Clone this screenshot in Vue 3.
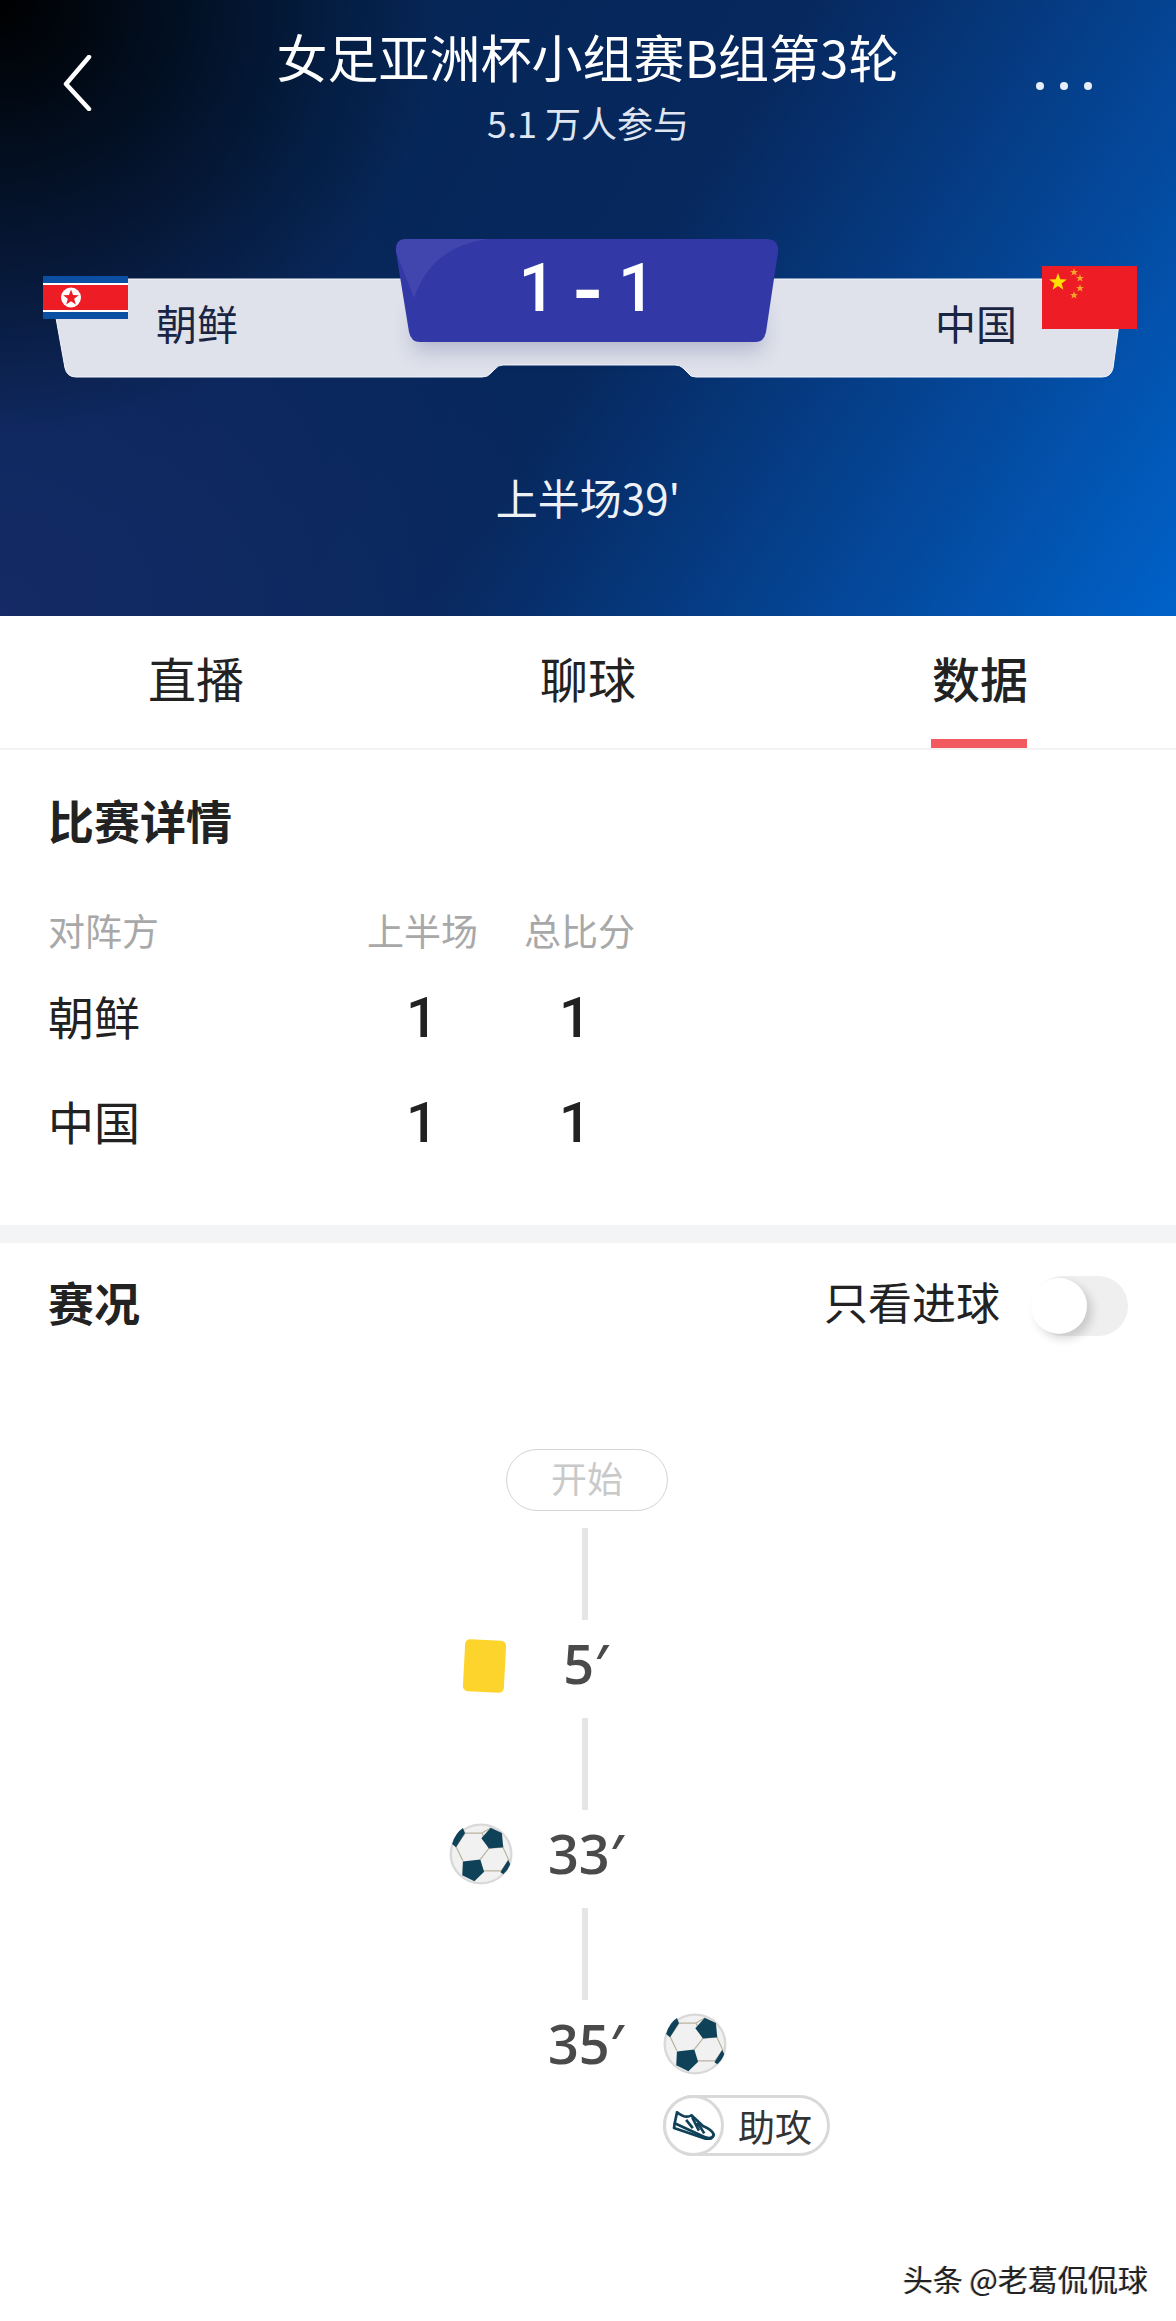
<template>
  <div class="page">
    <header class="hero">
      <div class="topbar">
        <div class="back">
          <svg width="30" height="56" viewBox="0 0 30 56"><path d="M27 2 L4 29 L27 54" fill="none" stroke="#fff" stroke-width="4.5" stroke-linecap="round" stroke-linejoin="round" /></svg>
        </div>
        <div class="heading">
          <h1>女足亚洲杯小组赛B组第3轮</h1>
          <p>5.1 万人参与</p>
        </div>
        <div class="more"><i></i><i></i><i></i></div>
      </div>

      <div class="board">
        <svg class="plate" width="1176" height="140" viewBox="0 0 1176 140">
          <path d="M49 39 H1125 L1113 128 Q1111 137 1102 137 H696 Q690 137 688 133 L683 128 Q680 125 675 125 H503 Q498 125 495 129 L491 133 Q488 137 482 137 H76 Q67 137 65 128 Z" fill="#dfe2eb" stroke="#f4f6fb" stroke-width="1" />
        </svg>
        <div class="shadow"></div>
        <svg class="score-bg" width="392" height="110" viewBox="0 0 392 110">
          <path d="M14 1 H374 Q387 1 386 14 L374 94 Q372 104 363 104 H28 Q19 104 17 94 L4 14 Q3 1 14 1Z" fill="#3238a6" />
          <path d="M14 1 H96 Q40 8 22 60 L4 14 Q3 1 14 1Z" fill="#4046ae" />
        </svg>
        <div class="score"><span>1</span><b>–</b><span>1</span></div>
        <svg class="flag flag-kp" width="85" height="43" viewBox="0 0 85 43">
          <rect width="85" height="43" fill="#0a4fa2" />
          <rect y="7" width="85" height="29" fill="#fff" />
          <rect y="9" width="85" height="25" fill="#ee1c25" />
          <circle cx="28" cy="21.5" r="10" fill="#fff" />
          <polygon points="28,13.5 30,19 35.8,19.2 31.2,22.8 32.8,28.4 28,25.2 23.2,28.4 24.8,22.8 20.2,19.2 26,19" fill="#ee1c25" />
        </svg>
        <svg class="flag flag-cn" width="95" height="63" viewBox="0 0 95 63">
          <rect width="95" height="63" fill="#ee1c25" />
          <polygon points="16,7 18.2,13.2 24.8,13.4 19.6,17.4 21.4,23.8 16,20 10.6,23.8 12.4,17.4 7.2,13.4 13.8,13.2" fill="#ffe100" />
          <g fill="#f2a52a">
            <polygon points="32,2 33,5 36,5 33.6,6.8 34.6,9.6 32,8 29.4,9.6 30.4,6.8 28,5 31,5" />
            <polygon points="38,8 39,11 42,11 39.6,12.8 40.6,15.6 38,14 35.4,15.6 36.4,12.8 34,11 37,11" />
            <polygon points="38,18 39,21 42,21 39.6,22.8 40.6,25.6 38,24 35.4,25.6 36.4,22.8 34,21 37,21" />
            <polygon points="32,25 33,28 36,28 33.6,29.8 34.6,32.6 32,31 29.4,32.6 30.4,29.8 28,28 31,28" />
          </g>
        </svg>
        <div class="names">
          <span>朝鲜</span>
          <span>中国</span>
        </div>
      </div>

      <div class="period">上半场39'</div>
    </header>

    <nav class="tabs">
      <div v-for="tab in tabs" :key="tab" class="tab" :class="{ active: tab === '数据' }">{{ tab }}</div>
    </nav>

    <section class="details">
      <h2>比赛详情</h2>
      <div class="table head">
        <span>对阵方</span><span>上半场</span><span>总比分</span>
      </div>
      <div v-for="row in rows" :key="row.name" class="table row">
        <span>{{ row.name }}</span>
        <b class="first">{{ row.half }}</b>
        <b class="total">{{ row.total }}</b>
      </div>
    </section>

    <div class="divider"></div>

    <section class="events">
      <div class="events-head">
        <h2>赛况</h2>
        <div class="filter">
          <span>只看进球</span>
          <div class="toggle"><i></i></div>
        </div>
      </div>

      <div class="start">开始</div>

      <template v-for="event in events" :key="event.time">
        <div class="line"></div>
        <div class="event">
          <div class="side left">
            <div v-if="event.left === 'card'" class="card"></div>
            <svg v-if="event.left === 'goal'" class="ball" width="64" height="62" viewBox="0 0 184 184" preserveAspectRatio="none">
              <use href="#ball-art" />
            </svg>
          </div>
          <div class="time">{{ event.time }}′</div>
          <div class="side right">
            <svg v-if="event.right === 'goal'" class="ball" width="64" height="62" viewBox="0 0 184 184" preserveAspectRatio="none">
              <use href="#ball-art" />
            </svg>
            <div v-if="event.assist" class="assist">
              <div class="shoe">
                <svg width="43" height="29" viewBox="0 0 128 85">
                  <path d="M15 3 L8 36 L100 78 Q124 84 124 68 Q118 55 92 44 L58 12 Q40 24 15 3Z" fill="#fff" stroke="#0f4259" stroke-width="8" stroke-linejoin="round" />
                  <path d="M8 36 L6 50 L100 82 Q122 86 124 68" fill="none" stroke="#0f4259" stroke-width="8" stroke-linejoin="round" />
                  <path d="M42 26 L62 50 M60 18 L80 58 M76 34 L96 66" stroke="#0f4259" stroke-width="8" />
                </svg>
              </div>
              <span>助攻</span>
            </div>
          </div>
        </div>
      </template>

      <svg width="0" height="0" class="defs">
        <defs>
          <g id="ball-art">
            <circle cx="92" cy="92" r="87" fill="#f1f1f1" stroke="#d9d9d9" stroke-width="7" />
            <path d="M40 30 H95 L115 75 L90 108 M115 75 L155 72 L172 110 L150 142 H100 M20 70 L40 112 M46 30 L20 70 M95 30 L120 15" fill="none" stroke="#b9b39f" stroke-width="3.5" />
            <polygon points="120,14 152,30 156,72 115,76 93,45" fill="#0f4259" />
            <polygon points="40,114 90,108 101,145 73,173 38,155" fill="#0f4259" />
            <path d="M40 15 L46 30 L20 72 L9 62 Q18 30 40 15Z" fill="#0f4259" />
            <path d="M170 110 L176 122 Q170 140 156 152 L148 146Z" fill="#0f4259" />
          </g>
        </defs>
      </svg>
    </section>

    <div class="watermark">头条 @老葛侃侃球</div>
  </div>
</template>

<script setup>
const tabs = ['直播', '聊球', '数据']

const rows = [
  { name: '朝鲜', half: 1, total: 1 },
  { name: '中国', half: 1, total: 1 },
]

const events = [
  { time: '5', left: 'card' },
  { time: '33', left: 'goal' },
  { time: '35', right: 'goal', assist: true },
]
</script>

<style scoped>
.page {
  position: relative;
  width: 1176px;
  height: 2321px;
  overflow: hidden;
  background: #fff;
  font-family: "Noto Sans CJK SC", "Noto Sans", sans-serif;
  color: #222;
}

h1, h2, p {
  margin: 0;
}

.hero {
  height: 616px;
  overflow: hidden;
  color: #fff;
  background:
    radial-gradient(circle at 0 0, #000 0, rgba(0, 0, 0, 0.6) 170px, rgba(0, 0, 0, 0) 440px),
    radial-gradient(circle at 0 100%, #152a66 0, rgba(21, 42, 102, 0) 560px),
    linear-gradient(122deg, #04244f 0%, #07285e 52%, #04499d 80%, #0062c9 100%);
}

.topbar {
  display: grid;
  grid-template-columns: 1fr auto 1fr;
  padding-top: 26px;
}

.back {
  padding: 29px 0 0 62px;
}

.heading {
  text-align: center;
}

.heading h1 {
  font-size: 51px;
  font-weight: 400;
  line-height: 60px;
}

.heading p {
  margin-top: 16px;
  font-size: 36px;
  line-height: 40px;
  color: #dfe6f2;
}

.more {
  display: flex;
  justify-self: end;
  gap: 16px;
  margin: 56px 84px 0 0;
}

.more i {
  width: 8px;
  height: 8px;
  border-radius: 50%;
  background: #e8eef8;
}

.board {
  position: relative;
  height: 140px;
  margin-top: 98px;
}

.plate {
  position: absolute;
  left: 0;
  top: 0;
}

.shadow {
  position: absolute;
  left: 414px;
  top: 60px;
  width: 348px;
  height: 40px;
  box-shadow: 0 10px 20px rgba(40, 45, 110, 0.25);
}

.score-bg {
  position: absolute;
  left: 392px;
  top: -2px;
}

.score {
  position: absolute;
  left: 391px;
  top: -3px;
  display: flex;
  justify-content: center;
  align-items: center;
  gap: 17px;
  width: 392px;
  height: 104px;
  font-family: Roboto, sans-serif;
  font-size: 66px;
  font-weight: 500;
  line-height: 104px;
}

.score b {
  font-size: 44px;
  font-weight: 700;
  transform: translateY(5px) scaleY(1.7);
}

.flag {
  position: absolute;
}

.flag-kp {
  left: 43px;
  top: 36px;
}

.flag-cn {
  left: 1042px;
  top: 26px;
}

.names {
  position: relative;
  display: flex;
  justify-content: space-between;
  padding: 58px 159px 0 156px;
  font-size: 41px;
  line-height: 48px;
  color: #1a2544;
}

.period {
  margin-top: 92px;
  text-align: center;
  font-size: 42px;
  line-height: 50px;
  color: #eef2f8;
}

.tabs {
  display: grid;
  grid-template-columns: repeat(3, 1fr);
  height: 134px;
  border-bottom: 2px solid #f3f3f3;
  box-sizing: border-box;
}

.tab {
  position: relative;
  padding-top: 33px;
  text-align: center;
  font-size: 48px;
  line-height: 56px;
  color: #222;
}

.tab.active {
  font-weight: 500;
}

.tab.active::after {
  content: "";
  position: absolute;
  left: 147px;
  bottom: 0;
  width: 96px;
  height: 9px;
  background: #f25a5f;
}

.details {
  height: 475px;
  box-sizing: border-box;
  padding: 41px 0 0 48px;
}

.details h2,
.events-head h2 {
  font-size: 46px;
  font-weight: 700;
  line-height: 56px;
  color: #222;
}

.table {
  display: grid;
  grid-template-columns: 319px 157px 130px;
  align-items: center;
  white-space: nowrap;
}

.head {
  margin-top: 60px;
  font-size: 37px;
  line-height: 46px;
  color: #a8a8a8;
}

.row {
  height: 105px;
  font-size: 46px;
  color: #222;
}

.head + .row {
  margin-top: 9px;
}

.row b {
  padding-top: 6px;
  font-family: Roboto, sans-serif;
  font-size: 56px;
  font-weight: 500;
}

.row .first {
  padding-left: 39px;
}

.row .total {
  padding-left: 35px;
}

.divider {
  height: 18px;
  background: #f3f4f6;
}

.events {
  position: relative;
}

.events-head {
  display: flex;
  justify-content: space-between;
  align-items: center;
  height: 116px;
  padding: 0 48px;
}

.filter {
  display: flex;
  align-items: center;
  gap: 33px;
  font-size: 44px;
  color: #222;
}

.toggle {
  position: relative;
  width: 95px;
  height: 60px;
  margin-top: 9px;
  border-radius: 30px;
  background: #efefef;
}

.toggle i {
  position: absolute;
  left: -2px;
  top: 2px;
  width: 56px;
  height: 56px;
  border-radius: 50%;
  background: #fff;
  box-shadow: 5px 5px 10px rgba(0, 0, 0, 0.16);
}

.start {
  box-sizing: border-box;
  width: 162px;
  height: 62px;
  margin: 90px 0 0 506px;
  border: 1.5px solid #d4d4d4;
  border-radius: 31px;
  text-align: center;
  font-size: 36px;
  line-height: 55px;
  color: #c9c9c9;
}

.line {
  width: 6px;
  height: 92px;
  margin: 17px 0 0 582px;
  background: #e5e5e5;
}

.event {
  position: relative;
  display: grid;
  grid-template-columns: 1fr 126px 1fr;
  align-items: start;
  height: 77px;
  margin-top: 4px;
}

.side {
  display: flex;
}

.left {
  justify-content: flex-end;
}

.right {
  flex-direction: column;
  align-items: flex-start;
}

.card {
  width: 41px;
  height: 52px;
  margin: 16px 20px 0 0;
  border-radius: 5px;
  background: #fdd42b;
  transform: rotate(3deg);
}

.left .ball {
  margin: 9px 12px 0 0;
}

.right .ball {
  margin: 9px 0 0 12px;
}

.time {
  text-align: center;
  font-family: "Open Sans", sans-serif;
  font-size: 54px;
  font-weight: 600;
  line-height: 78px;
  color: #4a4a4a;
  transform: translateX(-2px);
}

.assist {
  display: flex;
  align-items: center;
  box-sizing: border-box;
  width: 167px;
  height: 61px;
  margin: 20px 0 0 12px;
  border: 3px solid #d9d9d9;
  border-radius: 31px;
  font-size: 37px;
  color: #333;
}

.shoe {
  display: flex;
  justify-content: center;
  align-items: center;
  box-sizing: border-box;
  width: 61px;
  height: 61px;
  margin: -3px 14px -3px -3px;
  border: 3px solid #d9d9d9;
  border-radius: 50%;
  background: #fff;
}

.defs {
  position: absolute;
}

.watermark {
  position: absolute;
  right: 28px;
  top: 2260px;
  font-size: 30px;
  line-height: 36px;
  color: #222;
  text-shadow: 1px 1px 0 #fff, -1px 0 0 #bbb;
}
</style>

<style>
body {
  margin: 0;
}
</style>
